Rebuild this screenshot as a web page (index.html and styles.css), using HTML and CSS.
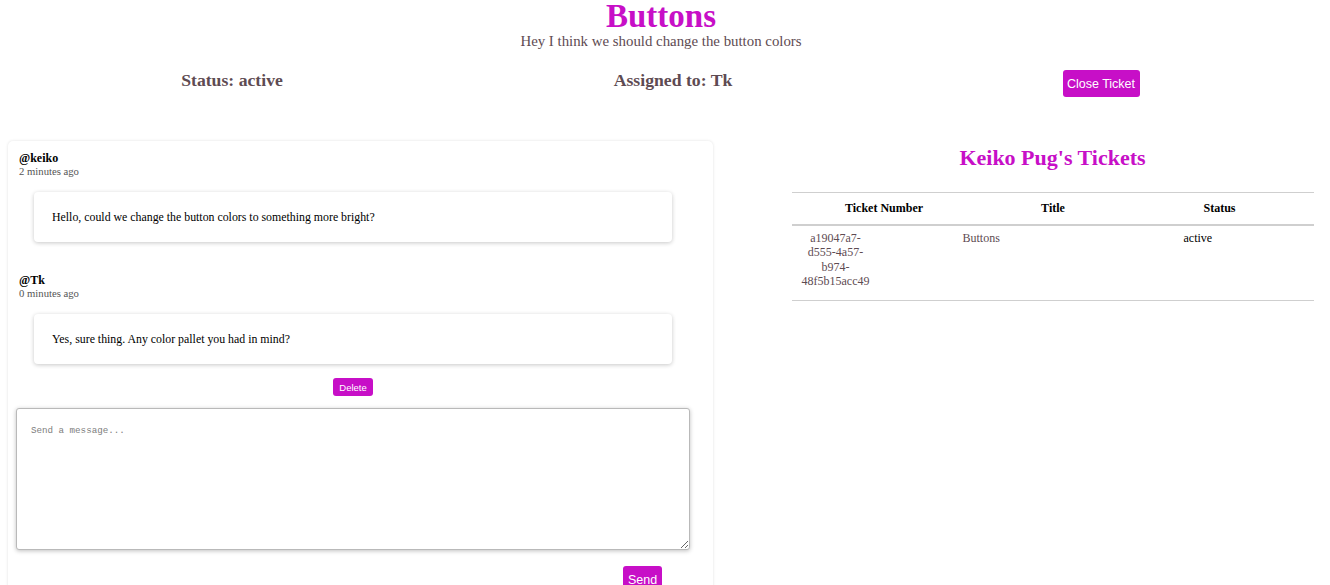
FILE: index.html
```html
<!DOCTYPE html>
<html>
<head>
<meta charset="utf-8">
<link rel="stylesheet" href="styles.css">
</head>
<body>
<header class="ticket-head">
  <h1 class="ticket-title">Buttons</h1>
  <p class="ticket-desc">Hey I think we should change the button colors</p>
</header>
<section class="status-row">
  <h3 class="status-item">Status: active</h3>
  <h3 class="status-item">Assigned to: Tk</h3>
  <div class="status-item"><button class="btn btn-close">Close Ticket</button></div>
</section>
<main class="main">
  <section class="chat-card">
    <div class="comment">
      <div class="comment-user">@keiko</div>
      <div class="comment-time">2 minutes ago</div>
      <div class="comment-body">
        <div class="bubble">Hello, could we change the button colors to something more bright?</div>
      </div>
    </div>
    <div class="comment">
      <div class="comment-user">@Tk</div>
      <div class="comment-time">0 minutes ago</div>
      <div class="comment-body">
        <div class="bubble">Yes, sure thing. Any color pallet you had in mind?</div>
        <div class="delete-wrap"><button class="btn btn-delete">Delete</button></div>
      </div>
    </div>
    <textarea class="message-input" placeholder="Send a message..."></textarea>
    <div class="send-row"><button class="btn btn-send">Send</button></div>
  </section>
  <section class="tickets">
    <h2 class="tickets-title">Keiko Pug's Tickets</h2>
    <table class="tickets-table">
      <colgroup><col class="c1"><col class="c2"><col class="c3"></colgroup>
      <thead>
        <tr><th class="th1">Ticket Number</th><th class="th2">Title</th><th class="th3">Status</th></tr>
      </thead>
      <tbody>
        <tr>
          <td><div class="ticket-id">a19047a7-d555-4a57-b974-48f5b15acc49</div></td>
          <td class="ticket-name">Buttons</td>
          <td class="ticket-status">active</td>
        </tr>
      </tbody>
    </table>
  </section>
</main>
</body>
</html>
```
FILE: styles.css
```css
* { box-sizing: border-box; }
html, body { margin: 0; padding: 0; background: #fff; }
body {
  font-family: "Liberation Serif", "Times New Roman", serif;
  color: #000;
  width: 1330px;
  height: 585px;
  overflow: hidden;
}
.ticket-head {
  text-align: center;
  padding-right: 8px;
}
.ticket-title {
  margin: 0;
  font-size: 33px;
  line-height: 33px;
  color: #c70fc7;
  font-weight: bold;
}
.ticket-desc {
  margin: 0;
  font-size: 14.85px;
  line-height: 17px;
  color: #5e4b52;
}
.status-row {
  display: grid;
  grid-template-columns: 464px 418px 438px;
  padding-top: 18px;
  height: 88px;
}
.status-item {
  margin: 0;
  text-align: center;
  font-size: 17.7px;
  line-height: 24px;
  color: #5e4b52;
  font-weight: bold;
}
.btn {
  background: #c70fc7;
  color: #fff;
  border: none;
  border-radius: 3px;
  font-family: "Liberation Sans", Arial, sans-serif;
  cursor: pointer;
  padding: 0;
}
.btn-close {
  width: 77px;
  height: 27px;
  font-size: 12.5px;
  margin: 2px 0 0 0;
}
.main {
  display: flex;
  align-items: flex-start;
  padding-left: 8px;
  margin-top: 3px;
}
.chat-card {
  width: 705px;
  background: #fff;
  border-radius: 5px;
  box-shadow: 0 0 3px rgba(0,0,0,0.12);
  padding: 11px 0 20px 0;
  height: 460px;
}
.comment { padding-left: 11px; }
.comment + .comment { margin-top: 32px; }
.comment-user {
  font-size: 12px;
  font-weight: bold;
  line-height: 13px;
}
.comment-time {
  font-size: 10.7px;
  line-height: 12px;
  color: #555;
}
.comment-body {
  width: 638px;
  margin: 15px 0 0 15px;
}
.bubble {
  height: 50px;
  display: flex;
  align-items: center;
  padding-left: 18px;
  font-size: 11.85px;
  background: #fff;
  border-radius: 4px;
  box-shadow: 0 1px 4px rgba(0,0,0,0.22);
}
.delete-wrap {
  text-align: center;
  padding-top: 14px;
}
.btn-delete {
  width: 40px;
  height: 18px;
  font-size: 9.5px;
  display: inline-block;
  vertical-align: top;
}
.message-input {
  display: block;
  width: 674px;
  height: 142px;
  margin: 12px 0 0 8px;
  border: 1px solid #b9b9b9;
  border-radius: 3px;
  box-shadow: 0 1px 4px rgba(0,0,0,0.25);
  padding: 15px 14px;
  font-family: "Liberation Mono", "DejaVu Sans Mono", monospace;
  font-size: 9.2px;
  line-height: 14px;
  resize: vertical;
  outline: none;
}
.message-input::placeholder { color: #7d7d7d; }
.send-row {
  width: 654px;
  text-align: right;
  padding-top: 16px;
}
.btn-send {
  width: 39px;
  height: 28px;
  font-size: 12.5px;
}
.tickets {
  width: 555px;
  margin-left: 62px;
  text-align: center;
}
.tickets-title {
  margin: 4px 0 21px 0;
  font-size: 22px;
  line-height: 26px;
  color: #c70fc7;
  font-weight: bold;
}
.tickets-table {
  width: 522px;
  margin: 0 auto;
  border-collapse: collapse;
  font-size: 12px;
}
.c1 { width: 171px; }
.c2 { width: 171px; }
.c3 { width: 180px; }
.tickets-table th {
  height: 32px;
  border-top: 1px solid #cfcfcf;
  border-bottom: 2px solid #cfcfcf;
  font-weight: bold;
  padding: 0;
  vertical-align: middle;
}
.tickets-table th.th1 { padding-left: 14px; }
.tickets-table th.th2 { padding-left: 10px; }
.tickets-table th.th3 { padding-right: 8px; }
.tickets-table td {
  border-bottom: 1px solid #cfcfcf;
  vertical-align: top;
  padding: 5px 0 8px 0;
  height: 76px;
  text-align: left;
  color: #5e4b52;
  line-height: 14.5px;
}
.ticket-id {
  width: 70px;
  margin-left: 9px;
  text-align: center;
}
.ticket-name { padding-left: 0; }
.tickets-table td.ticket-status { color: #000; padding-left: 50px; }
```
